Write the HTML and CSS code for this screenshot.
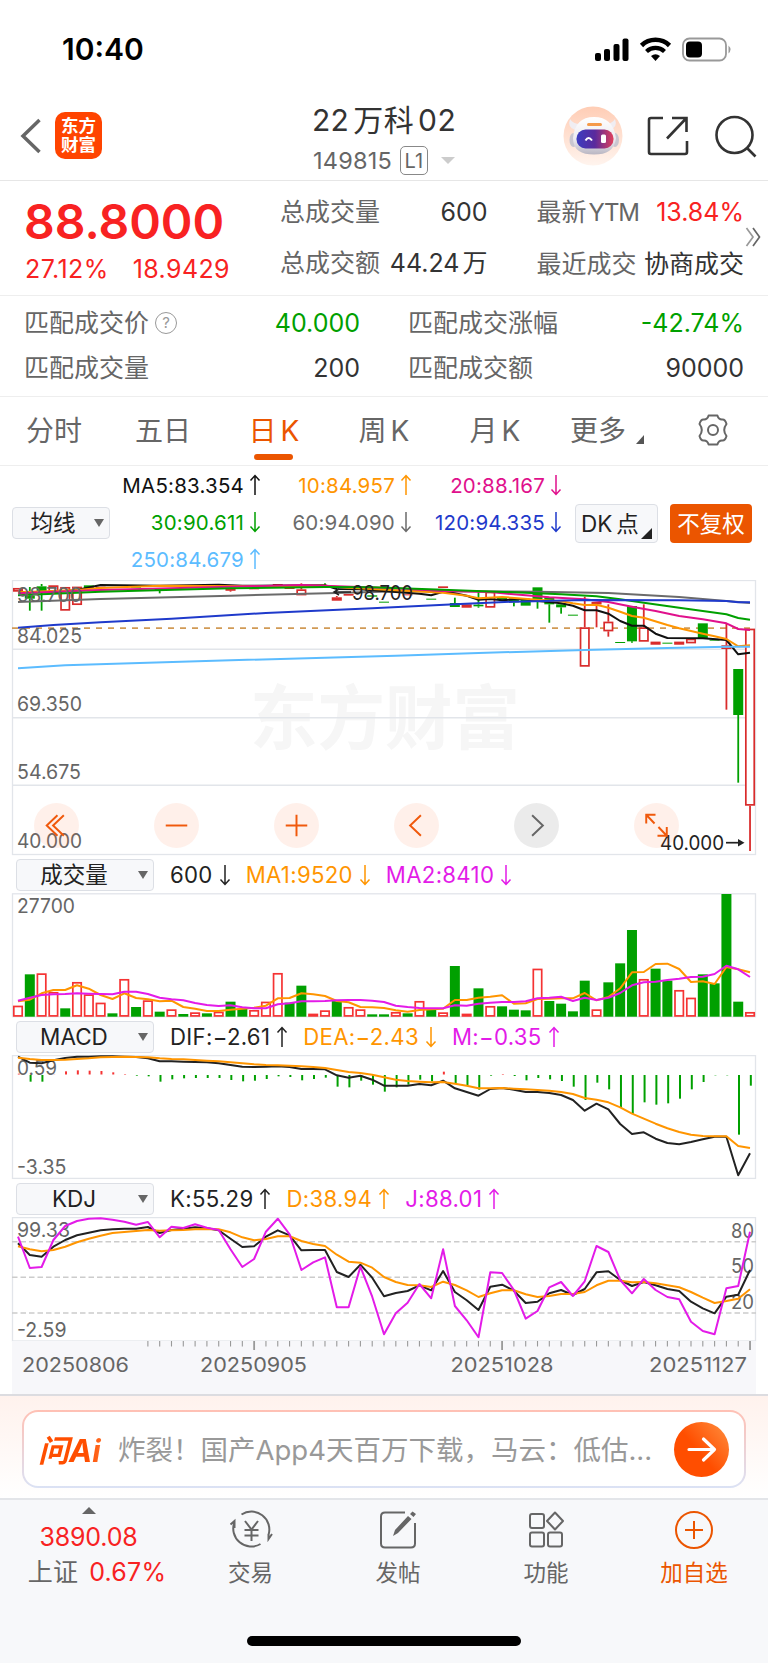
FILE: index.html
```html
<!DOCTYPE html>
<html lang="zh-CN">
  <head>
    <meta charset="utf-8" />
    <meta name="viewport" content="width=device-width, initial-scale=1.0" />
    <title>22万科02 149815</title>
    <link rel="stylesheet" href="styles.css">
  </head>
  <body>
    <svg class="defs" width="0" height="0">
      <symbol id="up" viewBox="0 0 12 22"><path d="M6 21V2M1.500 6.500L6 1.500l4.500 5" fill="none" stroke="currentColor" stroke-width="1.500"/></symbol>
      <symbol id="down" viewBox="0 0 12 22"><path d="M6 1v19M1.500 15.500L6 20.500l4.500-5" fill="none" stroke="currentColor" stroke-width="1.500"/></symbol>
    </svg>

    <div class="status">
      <span class="time">10:40</span>
      <svg width="138" height="26" viewBox="0 0 138 26">
        <rect x="1" y="17" width="6" height="8" rx="2"/>
        <rect x="10" y="13" width="6" height="12" rx="2"/>
        <rect x="19.500" y="8" width="6" height="17" rx="2"/>
        <rect x="28.500" y="2.500" width="6" height="22.500" rx="2"/>
        <path d="M47.500 9.500a20 20 0 0 1 28 0" fill="none" stroke="#000" stroke-width="4.600"/>
        <path d="M52.500 15.500a13 13 0 0 1 18 0" fill="none" stroke="#000" stroke-width="4.200"/>
        <path d="M57 20q4.500-3.500 9 0l-4.500 5z"/>
        <rect x="89" y="2.500" width="43" height="22" rx="6.500" fill="none" stroke="#999" stroke-width="1.800"/>
        <rect x="92" y="5.500" width="16" height="16" rx="4"/>
        <path d="M134.500 9.500q4 4 0 8z" fill="#999"/>
      </svg>
    </div>

    <header>
      <div class="left">
        <svg width="22" height="36" viewBox="0 0 22 36"><path d="M19.500 2L3 18l16.500 16" fill="none" stroke="#666" stroke-width="3.500"/></svg>
        <div class="logo">东方<br>财富</div>
      </div>
      <div class="title">
        <h1>22<i>万科</i>02</h1>
        <div class="code">149815<span class="level">L1</span><span class="caret"></span></div>
      </div>
      <div class="right">
        <svg width="60" height="60" viewBox="0 0 60 60">
          <defs>
            <linearGradient id="halo" x1="0" y1="0" x2="0" y2="1"><stop offset="0" stop-color="#ffcdb5"/><stop offset="1" stop-color="#fff4ee"/></linearGradient>
            <linearGradient id="visor" x1="0" y1="0" x2="1" y2="0"><stop offset="0" stop-color="#3c3cc0"/><stop offset=".5" stop-color="#5a2a9c"/><stop offset="1" stop-color="#e0405c"/></linearGradient>
            <linearGradient id="shell" x1="0" y1="0" x2="0" y2="1"><stop offset="0" stop-color="#fff"/><stop offset=".6" stop-color="#eceaf0"/><stop offset="1" stop-color="#b9b6c2"/></linearGradient>
          </defs>
          <circle cx="30" cy="30" r="29.500" fill="url(#halo)"/>
          <path d="M12 24q-8-3-5-11q3 5 10 5zM47 24q8-3 5-11q-3 5-10 5z" fill="#f0edf2"/>
          <ellipse cx="10.500" cy="34" rx="4" ry="7" fill="#c9c6d0"/>
          <ellipse cx="52" cy="34" rx="4" ry="7" fill="#c9c6d0"/>
          <path d="M10 32q2-21 21-21t22 21q-1 9-7 13q-5 3.500-15 3.500t-15-3.500q-6-4-6-13z" fill="url(#shell)"/>
          <rect x="24" y="17" width="15" height="3" rx="1.500" fill="#f59a4a"/>
          <rect x="13.500" y="23.500" width="37" height="19" rx="9" fill="url(#visor)"/>
          <path d="M22.500 34.500q3-5 6.500 0" fill="none" stroke="#fff" stroke-width="2"/>
          <rect x="38" y="28.500" width="5" height="8.500" rx="1.500" fill="#fff"/>
        </svg>
        <svg class="share" width="42" height="42" viewBox="0 0 42 42"><path d="M16 3H4q-2 0-2 2v32q0 2 2 2h34q2 0 2-2V26M25 3h14.500v14M39.500 3L20 23.500" fill="none" stroke="#333" stroke-width="2.600"/></svg>
        <svg class="search" width="44" height="44" viewBox="0 0 44 44"><circle cx="20.500" cy="21" r="18" fill="none" stroke="#333" stroke-width="2.600"/><path d="M32.500 33.500l9 9" stroke="#333" stroke-width="2.600"/></svg>
      </div>
    </header>

    <section class="quote">
      <div class="last">
        <div class="price">88.8000</div>
        <div class="change"><span>27.12%</span><span>18.9429</span></div>
      </div>
      <dl>
        <div><dt>总成交量</dt><dd>600</dd></div>
        <div><dt>总成交额</dt><dd>44.24<i>万</i></dd></div>
      </dl>
      <dl>
        <div><dt>最新<i>YTM</i></dt><dd class="red">13.84%</dd></div>
        <div><dt>最近成交</dt><dd>协商成交</dd></div>
      </dl>
      <svg class="more" width="18" height="20" viewBox="0 0 18 20"><path d="M1.500 1l6.500 9l-6.500 9" fill="none" stroke="#999" stroke-width="1.700"/><path d="M8 1l6.500 9L8 19" fill="none" stroke="#666" stroke-width="1.700"/></svg>
    </section>

    <section class="match">
      <dl>
        <div><dt>匹配成交价<span class="help">?</span></dt><dd class="green">40.000</dd></div>
        <div><dt>匹配成交量</dt><dd>200</dd></div>
      </dl>
      <dl>
        <div><dt>匹配成交涨幅</dt><dd class="green">-42.74%</dd></div>
        <div><dt>匹配成交额</dt><dd>90000</dd></div>
      </dl>
    </section>

    <nav class="tabs">
      <a>分时</a>
      <a>五日</a>
      <a class="active">日<i>K</i></a>
      <a>周<i>K</i></a>
      <a>月<i>K</i></a>
      <a class="drop">更多</a>
      <a class="gear"><svg width="34" height="34" viewBox="0 0 34 34" fill="none" stroke="#666" stroke-width="2"><path d="M12.600 2.500h8.800q1.300 4.500 5.300 4q2.500 0 3.800 4.500q-2.300 3-2.300 6t2.300 6q-1.300 4.500-3.800 4.500q-4-.5-5.300 4h-8.800q-1.300-4.500-5.300-4q-2.500 0-3.800-4.500q2.300-3 2.300-6t-2.300-6q1.300-4.500 3.800-4.500q4 .5 5.300-4z" stroke-linejoin="round"/><circle cx="17" cy="17" r="5"/></svg></a>
    </nav>

    <section class="averages">
      <div class="select small">均线</div>
      <div class="ma">
        <span class="black">MA5:83.354<svg><use href="#up"/></svg></span>
        <span class="orange">10:84.957<svg><use href="#up"/></svg></span>
        <span class="pink">20:88.167<svg><use href="#down"/></svg></span>
        <span class="green">30:90.611<svg><use href="#down"/></svg></span>
        <span class="gray">60:94.090<svg><use href="#down"/></svg></span>
        <span class="blue">120:94.335<svg><use href="#down"/></svg></span>
        <span class="sky">250:84.679<svg><use href="#up"/></svg></span>
      </div>
      <div class="dk">DK<i>点</i></div>
      <div class="adjust">不复权</div>
    </section>

    <div class="kline">
      <svg id="kline" width="768" height="276" viewBox="0 580 768 276"></svg>
      <div class="tools">
        <span><svg viewBox="0 0 46 46"><path d="M24 12.500L13 23l11 10.500M30.500 12.500L19.500 23l11 10.500"/></svg></span>
        <span><svg viewBox="0 0 46 46"><path d="M12 23h22"/></svg></span>
        <span><svg viewBox="0 0 46 46"><path d="M12 23h22M23 12v22"/></svg></span>
        <span><svg viewBox="0 0 46 46"><path d="M27.500 12.500L16.500 23l11 10.500"/></svg></span>
        <span class="off"><svg viewBox="0 0 46 46"><path d="M18.500 12.500L29.500 23l-11 10.500"/></svg></span>
        <span><svg viewBox="0 0 46 46"><path d="M22 12h-9.500v9M13 12.500l8 8.500M33.500 24.500v9H24M33 33l-8-8.500"/></svg></span>
      </div>
    </div>

    <div class="indicator">
      <div class="select">成交量</div>
      <span class="dark">600<svg><use href="#down"/></svg></span>
      <span class="orange">MA1:9520<svg><use href="#down"/></svg></span>
      <span class="magenta">MA2:8410<svg><use href="#down"/></svg></span>
    </div>
    <svg id="volume" width="768" height="125" viewBox="0 893 768 125"></svg>

    <div class="indicator">
      <div class="select">MACD</div>
      <span class="dark">DIF:−2.61<svg><use href="#up"/></svg></span>
      <span class="orange">DEA:−2.43<svg><use href="#down"/></svg></span>
      <span class="magenta">M:−0.35<svg><use href="#up"/></svg></span>
    </div>
    <svg id="macd" width="768" height="125" viewBox="0 1055 768 125"></svg>

    <div class="indicator">
      <div class="select">KDJ</div>
      <span class="dark">K:55.29<svg><use href="#up"/></svg></span>
      <span class="orange">D:38.94<svg><use href="#up"/></svg></span>
      <span class="magenta">J:88.01<svg><use href="#up"/></svg></span>
    </div>
    <svg id="kdj" width="768" height="177" viewBox="0 1217 768 177"></svg>

    <section class="ask">
      <div class="card">
        <div class="ai">问Ai</div>
        <div class="hint">炸裂！国产App4天百万下载，马云：低估...</div>
        <div class="go"><svg width="55" height="55" viewBox="0 0 55 55"><path d="M15 27.500h25M29.500 17L40.500 27.500L29.500 38" fill="none" stroke="#fff" stroke-width="3.200" stroke-linecap="round" stroke-linejoin="round"/></svg></div>
      </div>
    </section>

    <footer>
      <div class="index">
        <span class="peak"></span>
        <div class="red">3890.08</div>
        <div class="pct">上证<span class="red">0.67%</span></div>
      </div>
      <a>
        <svg width="44" height="40" viewBox="0 0 44 40"><path d="M12.500 4.500A18 18 0 0 1 39.500 25M31.500 34A18 18 0 0 1 5.500 12M1.500 14.500l4-3.500v7M43 24l-3.500 5v-5M16 11l6.500 8.500L29 11M22.500 19.500V31M15.500 20h14M15.500 25.500h14"/></svg>
        交易
      </a>
      <a>
        <svg width="40" height="40" viewBox="0 0 40 40"><path d="M27 2.500H7q-4 0-4 4v27q0 4 4 4h26q4 0 4-4V13"/><path d="M15 26l2-6L30 6l3.500 3L20 23zM32 4l2.500-2.500L38 4l-2.500 3z" fill="#666" stroke="none"/></svg>
        发帖
      </a>
      <a>
        <svg width="40" height="40" viewBox="0 0 40 40"><rect x="4" y="4" width="14" height="14" rx="2"/><rect x="4" y="22.500" width="14" height="14" rx="2"/><rect x="22" y="22.500" width="14" height="14" rx="2"/><path d="M29 2.500l8 8.500l-8 8.500l-8-8.500z" stroke-linejoin="round"/></svg>
        功能
      </a>
      <a class="add">
        <svg width="40" height="40" viewBox="0 0 40 40"><circle cx="20" cy="20" r="18"/><path d="M11 20h18M20 11v18"/></svg>
        加自选
      </a>
      <div class="home"></div>
    </footer>
    <script src="charts.js"></script>
  </body>
</html>
```
FILE: styles.css
```css
html, body {
    margin: 0;
    padding: 0;
    width: 768px;
    background: #fff;
    color: #333;
    font-family: 'Inter', 'Noto Sans CJK SC', sans-serif;
    font-size: 25px;
    -webkit-font-smoothing: antialiased;
}
svg { display: block; }
.defs { position: absolute; }
i { font-style: normal; }
h1, dl, dt, dd { margin: 0; padding: 0; }

.red { color: #f82222; }
.green { color: #00a000; }
.orange { color: #ff9500; }
.pink { color: #e0108c; }
.magenta { color: #e31be8; }
.gray { color: #6b6b6b; }
.blue { color: #1f3acb; }
.sky { color: #5cbcff; }
.black { color: #111; }
.dark { color: #222; }

/* status bar + header */
.status {
    display: flex;
    align-items: center;
    justify-content: space-between;
    height: 97px;
    padding: 0 36px 0 62px;
}
.time {
    color: #000;
    font-size: 30px;
    font-weight: 600;
}
header {
    display: grid;
    grid-template-columns: 1fr auto 1fr;
    height: 83px;
    border-bottom: 1px solid #e6e6e6;
}
.left {
    display: flex;
    align-items: center;
    padding: 0 0 6px 20px;
    gap: 13px;
}
.logo {
    width: 47px;
    height: 47px;
    padding-top: 5px;
    box-sizing: border-box;
    border-radius: 10px;
    background: #ff4400;
    color: #fff;
    font-size: 17.5px;
    font-weight: 600;
    line-height: 18.5px;
    text-align: center;
}
.title {
    padding-top: 3px;
    text-align: center;
}
.title h1 {
    font-size: 30px;
    font-weight: 400;
    line-height: 40px;
    letter-spacing: .4px;
}
.title h1 i { margin: 0 4px; }
.code {
    display: flex;
    align-items: center;
    justify-content: center;
    height: 40px;
    color: #666;
    font-size: 23.5px;
    letter-spacing: .2px;
}
.level {
    width: 26px;
    height: 27px;
    margin: 0 13px 0 8px;
    border: 1.5px solid #888;
    border-radius: 5px;
    font-size: 20px;
    line-height: 28px;
    text-align: center;
}
.caret {
    border: 7px solid transparent;
    border-top-color: #ccc;
    border-bottom: 0;
}
.right {
    display: flex;
    align-items: center;
    justify-content: flex-end;
    padding: 0 10px 5px 0;
}
.share { margin: 0 25px 0 24px; }

/* quote figures */
.quote {
    display: grid;
    position: relative;
    grid-template-columns: 206px 207.5px 207.5px;
    column-gap: 49px;
    height: 114px;
    padding-left: 25px;
    border-bottom: 1px solid #eee;
}
.last {
    padding-top: 11px;
    color: #f82222;
}
.price {
    margin-left: -1px;
    font-size: 48px;
    font-weight: 600;
    line-height: 60px;
    white-space: nowrap;
}
.change {
    display: flex;
    gap: 24px;
    line-height: 34px;
    letter-spacing: .4px;
}
dl { color: #333; }
dl div {
    display: flex;
    justify-content: space-between;
    white-space: nowrap;
}
dt { color: #666; }
dt i {
    margin-left: 2px;
    font-size: 24px;
    letter-spacing: -1.2px;
}
dd i { margin-left: 3px; }
.quote dl { padding-top: 6px; }
.quote dl div { line-height: 50.5px; }
.more {
    position: absolute;
    left: 745px;
    top: 46px;
}
.match {
    display: grid;
    grid-template-columns: 336px 336px;
    column-gap: 48px;
    height: 95px;
    padding: 5px 0 0 24px;
    border-bottom: 1px solid #eee;
}
.match dl div { line-height: 45px; }
.help {
    display: inline-block;
    width: 20px;
    height: 20px;
    margin-left: 6px;
    border: 1px solid #999;
    border-radius: 50%;
    color: #999;
    font-size: 15px;
    line-height: 20px;
    text-align: center;
    vertical-align: 4px;
}

/* period tabs */
.tabs {
    display: grid;
    grid-template-columns: 108px 110px 116px 100px 122px 84px 128px;
    height: 68px;
    border-bottom: 1px solid #eee;
    color: #666;
    font-size: 28px;
    line-height: 68px;
    text-align: center;
}
.tabs a { position: relative; }
.tabs i { margin-left: 4px; }
.tabs .active { left: -2px; color: #eb5500; }
.tabs .active::after {
    content: '';
    position: absolute;
    left: 38px;
    bottom: 5px;
    width: 39px;
    height: 6px;
    border-radius: 3px;
    background: #eb5500;
}
.drop::after {
    content: '';
    position: absolute;
    left: 80px;
    top: 38px;
    border-left: 8px solid transparent;
    border-bottom: 9px solid #555;
}
.gear { padding: 16px 0 0 56px; }

/* moving averages */
.averages {
    display: flex;
    align-items: center;
    height: 114px;
    padding-left: 12px;
}
.select {
    position: relative;
    box-sizing: border-box;
    width: 138px;
    height: 32px;
    padding-right: 22px;
    border: 1.5px solid #dcdfe5;
    border-radius: 4px;
    background: #f7f8fa;
    color: #222;
    font-size: 22.5px;
    line-height: 30px;
    text-align: center;
}
.select::after {
    content: '';
    position: absolute;
    right: 5px;
    top: 11px;
    border: 5px solid transparent;
    border-top: 8px solid #666;
    border-bottom: 0;
}
.small { width: 98px; padding-right: 16px; }
.ma {
    display: grid;
    grid-template-columns: 151px 151px 150px;
    grid-auto-rows: 37px;
    width: 451px;
    padding-bottom: 2px;
    font-size: 20.5px;
    letter-spacing: .2px;
}
.ma span, .indicator span {
    display: flex;
    align-items: center;
    justify-content: flex-end;
    white-space: nowrap;
}
.ma svg {
    width: 12px;
    height: 22px;
    margin-left: 5px;
}
.dk, .adjust {
    box-sizing: border-box;
    height: 39px;
    border-radius: 4px;
    font-size: 22.5px;
    line-height: 37px;
}
.dk {
    position: relative;
    width: 83px;
    margin-left: 14px;
    padding-left: 5px;
    border: 1px solid #dcdfe5;
    background: #f7f8fa;
    color: #222;
}
.dk i { margin-left: 4px; }
.dk::after {
    content: '';
    position: absolute;
    right: 5px;
    bottom: 3px;
    border-left: 11px solid transparent;
    border-bottom: 11px solid #222;
}
.adjust {
    width: 82px;
    margin-left: 12px;
    background: #eb5500;
    color: #fff;
    line-height: 39px;
    text-align: center;
}

/* charts */
.kline { position: relative; }
.tools {
    display: flex;
    position: absolute;
    left: 34px;
    top: 223px;
    gap: 75px;
}
.tools span {
    width: 45px;
    height: 45px;
    border-radius: 50%;
    background: rgba(255, 110, 50, .1);
}
.tools .off { background: rgba(0, 0, 0, .08); }
.tools svg {
    fill: none;
    stroke: #f0590c;
    stroke-width: 2;
}
.tools .off svg { stroke: #666; }
.indicator {
    display: flex;
    align-items: center;
    height: 37px;
    padding-left: 16px;
    font-size: 22.2px;
    letter-spacing: .3px;
}
.indicator .select { margin-right: 1px; letter-spacing: 0; }
.indicator span { margin-left: 15px; }
.indicator svg {
    width: 12px;
    height: 22px;
    margin-left: 6px;
}
.axis {
    fill: #666;
    font-size: 20px;
}
.tag {
    fill: #222;
    font-size: 20px;
}
.watermark {
    fill: #f6f6f6;
    font-size: 70px;
    font-weight: 700;
}

/* ask bar */
.ask {
    height: 104px;
    padding: 14px 22px 0;
    box-sizing: border-box;
    border-top: 2px solid #dcdce0;
    background: linear-gradient(#fff2ed, #fff);
}
.card {
    display: flex;
    align-items: center;
    height: 74px;
    padding: 0 15px 0 14px;
    border: 2px solid transparent;
    border-radius: 16px;
    background: linear-gradient(#fff, #fff) padding-box, linear-gradient(#ffc0b4, #dbe2f5) border-box;
}
.ai {
    width: 80px;
    padding-bottom: 2px;
    background: linear-gradient(90deg, #ff4e00 60%, #ff8a4a);
    background-clip: text;
    color: transparent;
    font-size: 31px;
    font-style: italic;
    font-weight: 700;
}
.hint {
    flex: 1;
    padding-bottom: 2px;
    color: #999;
    font-size: 27.5px;
    white-space: nowrap;
}
.go {
    width: 55px;
    height: 55px;
    border-radius: 50%;
    background: linear-gradient(50deg, #ff4e00 45%, #ff9040);
}

/* bottom bar */
footer {
    display: grid;
    position: relative;
    grid-template-columns: 177px 147px 148px 148px 148px;
    height: 163px;
    border-top: 2px solid #e3e5e9;
    background: #f7f8fa;
}
footer a {
    display: flex;
    flex-direction: column;
    align-items: center;
    padding-top: 10px;
    color: #666;
    font-size: 22.5px;
    line-height: 45px;
}
footer a svg {
    fill: none;
    stroke: #666;
    stroke-width: 2;
}
footer .add { color: #eb5500; }
footer .add svg { stroke: #eb5500; }
.index {
    padding-top: 7px;
    text-align: center;
    line-height: 35px;
    letter-spacing: -.2px;
}
.index .red { color: #f82222; }
.pct { padding: 0 0 0 17px; color: #666; letter-spacing: .2px; }
.pct span { margin-left: 11px; }
.peak {
    display: block;
    width: 0;
    margin: 0 auto 6px;
    border: 7px solid transparent;
    border-bottom-color: #666;
    border-top: 0;
}
.home {
    position: absolute;
    left: 247px;
    bottom: 17px;
    width: 274px;
    height: 10px;
    border-radius: 5px;
    background: #000;
}
```
FILE: charts.js
```js
const RED = '#d92b2b', GREEN = '#00a000', GRID = '#e2e5ea';
const INK = '#222', ORANGE = '#ff9500', MAGENTA = '#e31be8';

// one slot per trading day
const x = i => 18 + i * 11.807;
// series are stored on a 3x grid, relative to the top of their pane
const scale = top => v => top + v / 3;

function line(points, y, color) {
    const d = points.map((p, i) => Array.isArray(p) ? [p[0], p[1]] : [i, p])
        .map(p => x(p[0]).toFixed(1) + ',' + y(p[1]).toFixed(1)).join(' ');
    return `<polyline points="${d}" fill="none" stroke="${color}" stroke-width="2" stroke-linejoin="round"/>`;
}
function text(s, left, base, width, cls = 'axis') {
    return `<text class="${cls}" x="${left}" y="${base}" textLength="${width}" lengthAdjust="spacingAndGlyphs">${s}</text>`;
}
function rule(y, extra = '') {
    return `<path d="M12 ${y}H756" stroke="${GRID}" stroke-width="1.6" ${extra}/>`;
}
function frame(top, bottom) {
    return `<rect x="12.5" y="${top}" width="743" height="${bottom - top}" fill="none" stroke="${GRID}" stroke-width="1.3"/>`;
}
function bar(i, color, top, bottom, stroke = color) {
    const h = Math.max(bottom - top, 1);
    if (stroke === GREEN || h < 2) return `<rect x="${x(i) - 5}" y="${top}" width="10" height="${h}" fill="${stroke}"/>`;
    return `<rect x="${x(i) - 4.2}" y="${top + .8}" width="8.4" height="${Math.max(h - 1.6, .8)}" fill="${color}" stroke="${stroke}" stroke-width="1.7"/>`;
}
const draw = (id, html) => { document.getElementById(id).innerHTML = html; };

// k line: [day, up, bodyTop, bodyBottom, high, low]
const candles = [
    [0, 1, 369, 380], [1, 0, 392, 401, 366, 437], [2, 0, 364, 378, 357, 437], [3, 1, 361, 380],
    [4, 1, 366, 437], [5, 1, 365, 420], [6, 0, 361, 370], [7, 1, 365, 369], [10, 0, 365, 368], [12, 0, 372, 377, 370, 385],
    [14, 1, 363, 366], [18, 1, 370, 376, 368, 380], [20, 1, 370, 373], [22, 1, 357, 361], [23, 1, 367, 372],
    [24, 1, 373, 391, 355, 391], [26, 0, 362, 365, 355, 366], [27, 1, 397, 407, 393, 407], [28, 1, 387, 392], [30, 0, 391, 395],
    [31, 0, 410, 413], [33, 1, 388, 391], [35, 0, 401, 404], [36, 1, 364, 369], [37, 0, 414, 426, 398, 426], [38, 1, 418, 428],
    [39, 0, 419, 424, 380, 428], [40, 1, 380, 428], [41, 0, 396, 404], [42, 0, 400, 412, 398, 424], [43, 0, 405, 422],
    [44, 0, 367, 402, 367, 431], [45, 0, 396, 418, 396, 473], [46, 0, 418, 427, 415, 446], [47, 0, 449, 452],
    [48, 1, 487, 605, 395, 605], [49, 1, 411, 418, 411, 487], [50, 1, 470, 499, 418, 515], [51, 0, 531, 534],
    [52, 0, 423, 529, 423, 533], [53, 1, 487, 530, 418, 530], [54, 1, 530, 539], [55, 0, 533, 536], [56, 1, 530, 539],
    [57, 1, 521, 535], [58, 0, 475, 521], [59, 0, 524, 527], [60, 1, 541, 552, 475, 734], [61, 0, 612, 750, 612, 953],
    [62, 1, 491, 1022, 491, 1158]
];
const ky = scale(465);
let out = text('东方财富', 250, 744, 270, 'watermark') + frame(580.5, 854.5)
    + rule(649.3) + rule(717.7) + rule(785.3)
    + '<path d="M12 628.2H756" stroke="#d19a55" stroke-width="1.8" stroke-dasharray="6 6"/>';
candles.forEach(([i, up, top, bottom, high, low]) => {
    const c = up ? RED : GREEN;
    if (high && high < top) out += `<path d="M${x(i)} ${ky(high)}V${ky(top)}" stroke="${c}" stroke-width="1.8"/>`;
    if (low && low > bottom) out += `<path d="M${x(i)} ${ky(bottom)}V${ky(low)}" stroke="${c}" stroke-width="1.8"/>`;
    out += bar(i, up ? '#fff' : c, ky(top), ky(bottom), c);
});
out += line([[0, 411], [7, 402], [18, 392], [27, 384], [33, 378], [44, 380], [50, 384], [56, 396], [60, 408], [62, 414]], ky, '#6b6b6b')
    + line([[0, 382], [3, 382], [5, 375], [7, 360], [12, 362], [17, 359], [19, 362], [26, 361], [27, 372], [29, 373], [30, 376], [34, 386], [35, 391], [36, 380], [37, 385], [38, 392], [39, 404], [40, 402], [41, 406], [42, 403], [43, 403], [44, 408], [45, 411], [46, 415], [47, 422], [48, 436], [49, 436], [50, 446], [51, 468], [52, 482], [53, 482], [54, 506], [55, 519], [58, 520], [60, 525], [61, 568], [62, 563]], ky, '#111')
    + line([[0, 382], [3, 378], [5, 375], [7, 369], [12, 362], [21, 364], [26, 362], [28, 368], [32, 376], [36, 383], [38, 392], [39, 400], [41, 396], [44, 404], [46, 409], [47, 415], [48, 420], [49, 419], [50, 428], [51, 440], [52, 453], [53, 458], [55, 480], [56, 490], [57, 498], [58, 506], [59, 514], [60, 522], [61, 544], [62, 541]], ky, ORANGE)
    + line([[0, 385], [7, 375], [18, 365], [24, 360], [32, 370], [36, 378], [40, 381], [42, 388], [45, 397], [48, 403], [50, 411], [52, 425], [54, 438], [56, 453], [58, 463], [60, 475], [61, 492], [62, 495]], ky, '#e0108c')
    + line([[0, 391], [7, 380], [18, 370], [26, 366], [30, 367], [36, 374], [42, 382], [46, 388], [49, 394], [51, 403], [53, 413], [56, 428], [60, 448], [61, 459], [62, 464]], ky, GREEN)
    + line([[0, 488], [3, 480], [7, 472], [13, 461], [21, 444], [30, 430], [37, 418], [42, 410], [48, 405], [56, 406], [60, 408], [61, 412], [62, 412]], ky, '#1f3acb')
    + line([[0, 610], [4, 601], [18, 586], [32, 572], [39, 564], [48, 555], [55, 549], [60, 545], [62, 545]], ky, '#5cbcff')
    + text('98.700', 17, 601.5, 65) + text('84.025', 17, 642.5, 65) + text('69.350', 17, 711, 65)
    + text('54.675', 17, 779, 64) + text('40.000', 17, 848, 65)
    + '<path d="M351 592H334M339 589l-5 3l5 3" fill="none" stroke="#222" stroke-width="1.5"/>' + text('98.700', 352, 599.5, 61, 'tag')
    + text('40.000', 660, 850, 64, 'tag') + '<path d="M726 842.700H742" stroke="#222" stroke-width="1.7"/><path d="M738 839l6.500 3.700l-6.500 3.700z" fill="#222"/>';
draw('kline', out);

// volume, negative = down day
const volume = [362, -268, 265, 321, -370, 291, 328, 353, -385, 282, -366, 346, -380, 373, -387, 382, -385, 380, -350, -371, 375,
    350, 264, -353, -302, 386, 376, -347, 366, 373, -388, -388, 381, -385, 348, -375, 382, -243, 386, -310, 363, -364, -374, -376, 251,
    -348, -356, -379, -287, 373, -292, -235, -135, 282, -251, -287, 315, 338, -268, -295, -27, -350, 381];
const ma1 = [349, 344, 325, 315, 315, 301, 311, 330, 342, 325, 339, 343, 349, 347, 366, 371, 378, 378, 374, 371, 368, 362, 340, 339,
    325, 328, 333, 348, 352, 366, 367, 369, 376, 380, 375, 373, 371, 345, 345, 338, 335, 331, 356, 355, 342, 341, 340, 340, 324, 346,
    336, 310, 262, 261, 237, 236, 252, 291, 289, 297, 246, 253, 262];
const ma2 = [347, 338, 330, 328, 327, 325, 326, 327, 328, 320, 320, 327, 338, 343, 346, 354, 360, 363, 361, 367, 370, 370, 358, 355,
    349, 349, 348, 346, 345, 345, 347, 351, 362, 366, 369, 370, 370, 361, 362, 356, 353, 351, 351, 349, 340, 338, 335, 348, 338, 345,
    338, 324, 301, 292, 290, 285, 281, 276, 275, 267, 242, 253, 276];
const vy = scale(885);
out = frame(893.8, 1016.7);
volume.forEach((v, i) => {
    out += v > 0 ? bar(i, '#fff', vy(v), 1016.7, '#f53333') : bar(i, GREEN, vy(-v), 1016.7);
});
out += line(ma1, vy, ORANGE) + line(ma2, vy, MAGENTA) + text('27700', 17, 913, 58);
draw('volume', out);

// macd
const hist = [71, 95, 95, 73, 64, 61, 62, 63, 67, 72, 77, 79, 95, 88, 85, 84, 84, 84, 90, 94, 92, 87, 79, 81, 91, 87, 83, 110, 112,
    92, 104, 125, 112, 104, 89, 94, 65, 101, 107, 119, 77, 72, 78, 91, 84, 88, 93, 110, 150, 98, 118, 173, 192, 157, 164, 160, 146,
    118, 96, 76, 76, 254, 107];
const dif = [20, 38, 40, 31, 24, 20, 20, 19, 19, 20, 21, 25, 34, 34, 35, 36, 37, 40, 45, 50, 51, 50, 49, 51, 57, 57, 58, 76, 83, 77,
    89, 107, 107, 107, 102, 106, 92, 115, 126, 137, 117, 114, 119, 126, 126, 129, 135, 150, 182, 161, 178, 222, 252, 247, 266, 279,
    283, 276, 268, 260, 260, 376, 310];
const dea = [23, 27, 30, 30, 29, 27, 25, 22, 21, 20, 21, 22, 25, 27, 28, 30, 32, 34, 37, 40, 43, 45, 46, 47, 49, 51, 54, 60, 66, 69,
    74, 82, 89, 93, 95, 97, 96, 101, 107, 115, 115, 114, 116, 118, 120, 122, 126, 132, 144, 149, 157, 172, 191, 206, 221, 235, 246,
    254, 258, 259, 259, 288, 294];
const my = scale(1050);
out = frame(1055.6, 1178.4) + text('0.59', 17, 1075, 40) + text('-3.35', 17, 1174, 49.5);
hist.forEach((v, i) => {
    out += `<path d="M${x(i) + .8} ${v < 75 ? 1074.500 : 1075}V${my(v)}" stroke="${v < 75 ? '#f53333' : GREEN}" stroke-width="2"/>`;
});
out += line(dif, my, INK) + line(dea, my, ORANGE);
draw('macd', out);

// kdj and date axis
const k = [580, 615, 620, 590, 570, 556, 548, 541, 538, 536, 536, 531, 549, 540, 536, 532, 535, 541, 566, 591, 589, 560, 541, 556, 601,
    600, 600, 666, 681, 644, 683, 739, 729, 723, 706, 721, 663, 726, 751, 780, 710, 704, 722, 759, 755, 730, 720, 735, 717, 667, 664,
    690, 708, 696, 706, 717, 723, 755, 775, 790, 740, 734, 660];
const d = [589, 598, 604, 600, 590, 577, 566, 557, 549, 546, 543, 540, 542, 541, 540, 538, 537, 538, 547, 562, 571, 567, 559, 559, 573,
    582, 588, 614, 635, 638, 653, 681, 696, 705, 706, 711, 695, 705, 721, 741, 730, 721, 721, 733, 741, 738, 732, 732, 726, 706, 692,
    692, 697, 696, 700, 706, 712, 726, 743, 759, 753, 746, 718];
const j = [560, 654, 651, 570, 528, 513, 506, 505, 509, 515, 524, 516, 562, 530, 534, 523, 533, 540, 598, 651, 627, 545, 506, 553, 660,
    637, 622, 772, 772, 650, 740, 853, 790, 758, 702, 745, 598, 768, 811, 862, 667, 669, 720, 806, 783, 712, 696, 738, 694, 588, 606,
    690, 730, 687, 720, 741, 748, 815, 843, 853, 715, 708, 545];
const dash = 'stroke-dasharray="5.5 3" style="stroke:#ccc"';
out = frame(1217.6, 1341) + '<rect x="12" y="1341" width="744" height="53" fill="#f7f7fa"/>'
    + rule(1241.7, dash) + rule(1277.3, dash) + rule(1313, dash)
    + text('99.33', 17, 1237, 53) + text('-2.59', 17, 1336.5, 49.5)
    + text('80', 731, 1238, 23) + text('50', 731, 1273, 23) + text('20', 731, 1308.5, 23);
for (let i = 11; i < 63; i++) {
    const major = i === 20 || i === 41 || i === 62;
    out += `<path d="M${x(i)} 1341V${major ? 1350 : 1346.5}" stroke="#999" stroke-width="${major ? 1.8 : 1.1}"/>`;
}
out += text('20250806', 22, 1371.5, 107) + text('20250905', 200, 1371.5, 107)
    + text('20251028', 450.5, 1371.5, 103) + text('20251127', 649, 1371.5, 98)
    + line(k, my, INK) + line(d, my, ORANGE) + line(j, my, MAGENTA);
draw('kdj', out);
```
